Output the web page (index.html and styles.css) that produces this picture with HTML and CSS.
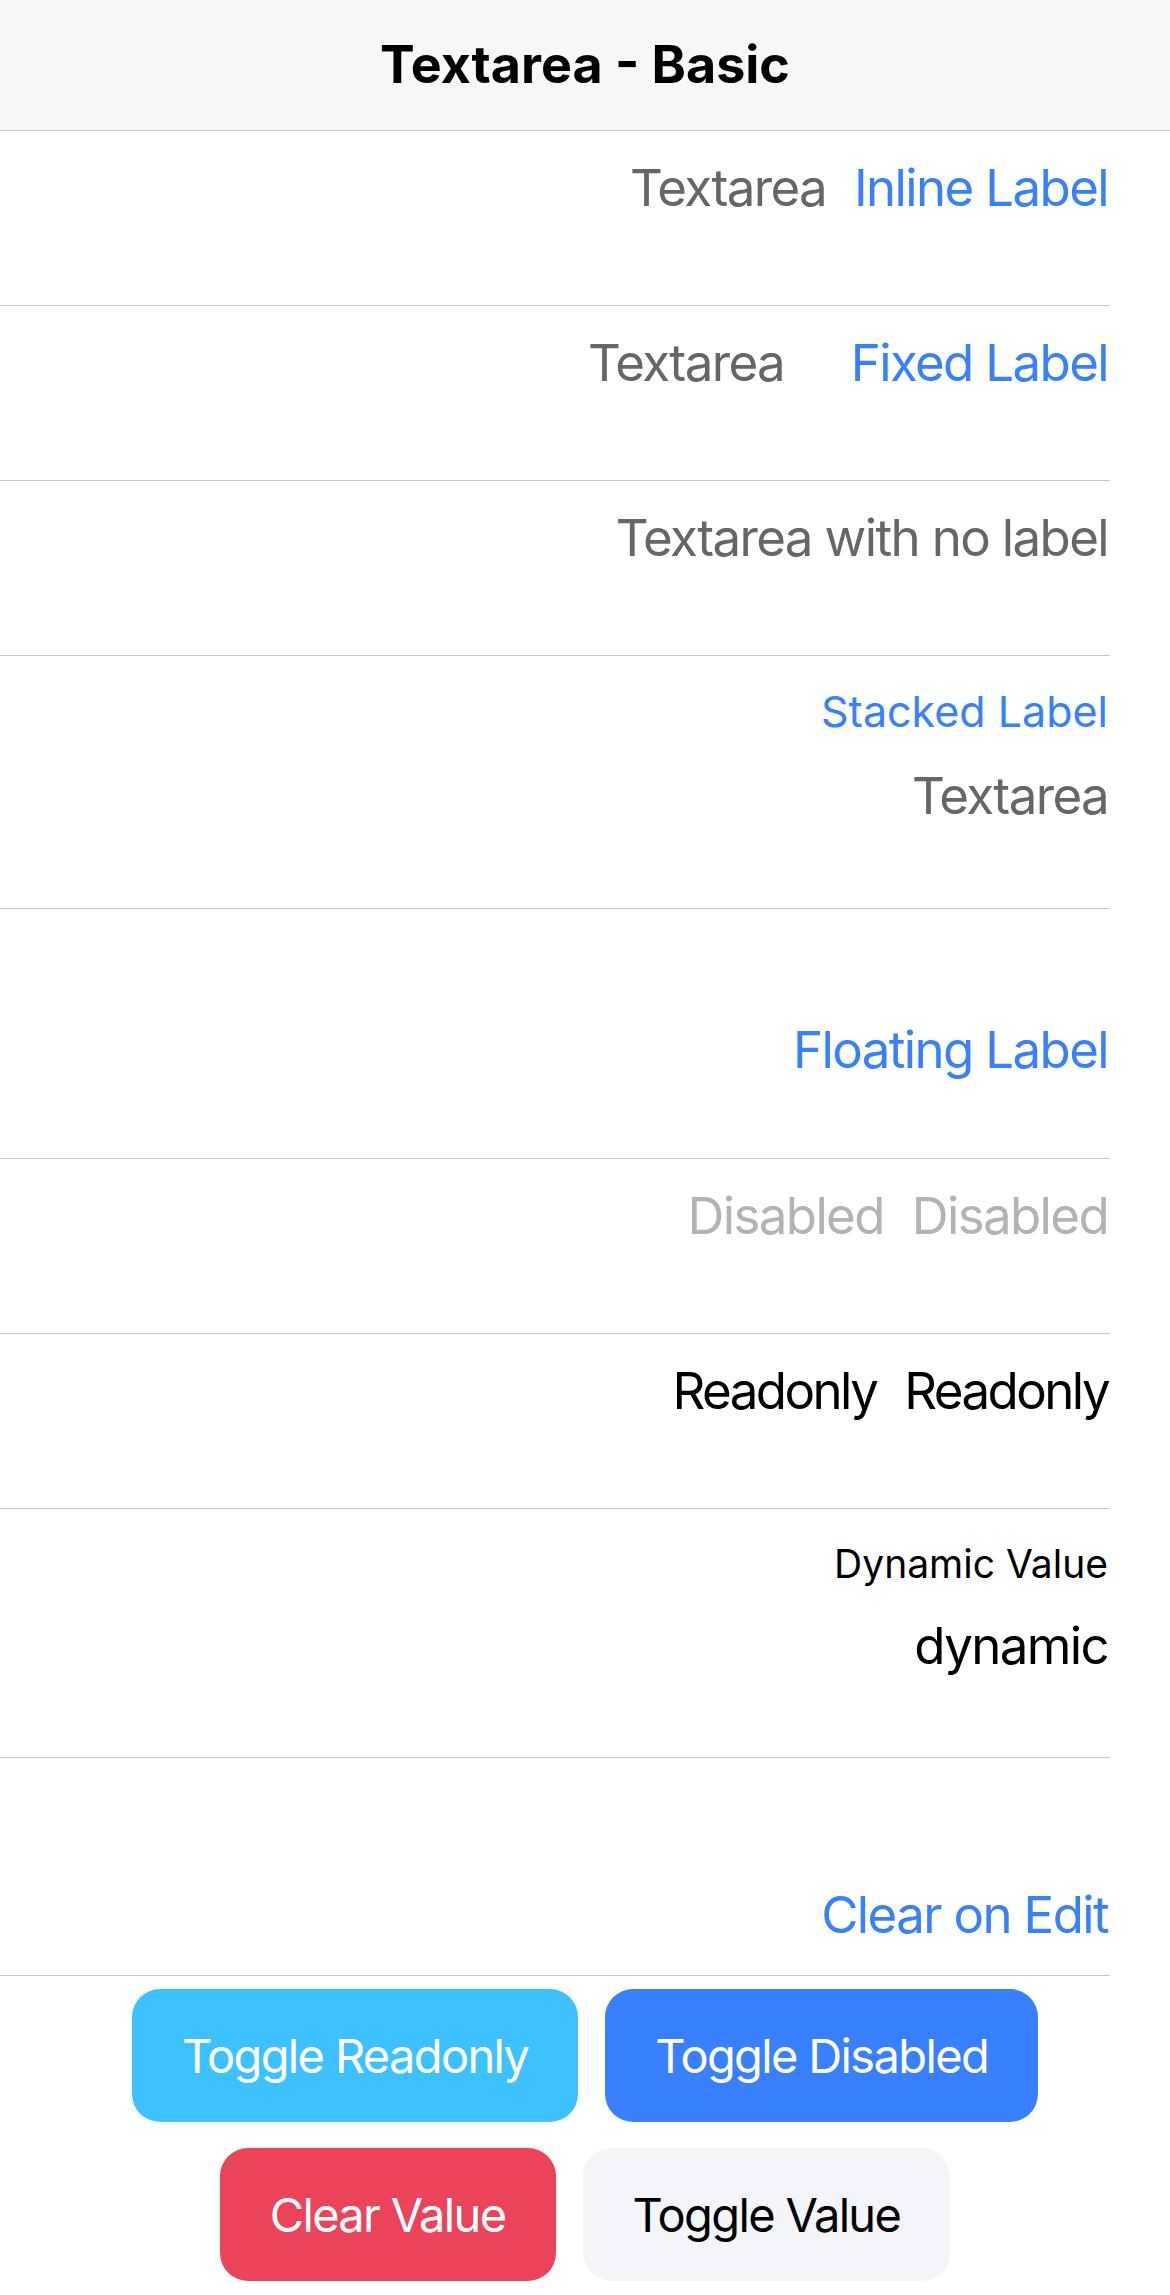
FILE: index.html
```html
<!DOCTYPE html>
<html lang="en">
<head>
<meta charset="utf-8">
<title>Textarea - Basic</title>
<link rel="stylesheet" href="styles.css">
</head>
<body>
<header class="toolbar">
  <h1 class="title">Textarea - Basic</h1>
</header>
<main class="list" dir="rtl">
  <div class="item">
    <div class="item-inner row">
      <span class="label primary">Inline Label</span>
      <div class="textarea placeholder">Textarea</div>
    </div>
  </div>
  <div class="item">
    <div class="item-inner row">
      <span class="label primary fixed">Fixed Label</span>
      <div class="textarea placeholder">Textarea</div>
    </div>
  </div>
  <div class="item">
    <div class="item-inner row">
      <div class="textarea placeholder">Textarea with no label</div>
    </div>
  </div>
  <div class="item">
    <div class="item-inner stacked">
      <span class="label primary small">Stacked Label</span>
      <div class="textarea placeholder after-small">Textarea</div>
    </div>
  </div>
  <div class="item">
    <div class="item-inner floating">
      <span class="label primary">Floating Label</span>
    </div>
  </div>
  <div class="item">
    <div class="item-inner row disabled">
      <span class="label">Disabled</span>
      <div class="textarea">Disabled</div>
    </div>
  </div>
  <div class="item">
    <div class="item-inner row readonly">
      <span class="label dark">Readonly</span>
      <div class="textarea dark">Readonly</div>
    </div>
  </div>
  <div class="item">
    <div class="item-inner dynamic">
      <span class="label dark smaller">Dynamic Value</span>
      <div class="textarea dark after-smaller">dynamic</div>
    </div>
  </div>
  <div class="item">
    <div class="item-inner clear-edit">
      <span class="label primary">Clear on Edit</span>
    </div>
  </div>
</main>
<div class="buttons">
  <div class="btn-row">
    <button class="btn btn-secondary" type="button">Toggle Readonly</button>
    <button class="btn btn-primary" type="button">Toggle Disabled</button>
  </div>
  <div class="btn-row">
    <button class="btn btn-danger" type="button">Clear Value</button>
    <button class="btn btn-light" type="button">Toggle Value</button>
  </div>
</div>
</body>
</html>
```
FILE: styles.css
```css
html, body {
  margin: 0;
  padding: 0;
  background: #ffffff;
}

body {
  font-family: Inter, "Noto Sans", "Liberation Sans", sans-serif;
  color: #000000;
  -webkit-font-smoothing: antialiased;
}

.toolbar {
  box-sizing: border-box;
  height: 131px;
  background: #f7f7f7;
  border-bottom: 1px solid #c6c6c8;
  display: flex;
  align-items: center;
  justify-content: center;
}

.title {
  margin: 0;
  font-size: 52px;
  line-height: 62px;
  font-weight: 700;
  letter-spacing: 0;
}

.list {
  display: flex;
  flex-direction: column;
}

.item {
  padding-inline-start: 60px;
}

.item-inner {
  box-sizing: border-box;
  height: 175px;
  padding-inline-start: 2px;
  border-bottom: 1px solid #c8c7cc;
  font-size: 51px;
  line-height: 62px;
  letter-spacing: -0.032em;
}

.row {
  display: flex;
  align-items: flex-start;
  gap: 28px;
  padding-top: 26px;
}

.readonly {
  letter-spacing: -0.05em;
}

.stacked {
  height: 253px;
  display: flex;
  flex-direction: column;
  align-items: stretch;
}

.floating {
  height: 250px;
  padding-top: 110px;
}

.dynamic {
  height: 249px;
  display: flex;
  flex-direction: column;
}

.clear-edit {
  height: 218px;
  padding-top: 126px;
}

.label {
  flex: 0 0 auto;
  white-space: nowrap;
}

.label.fixed {
  width: 296px;
}

.label.small {
  font-size: 43px;
  line-height: 50px;
  letter-spacing: 0;
  margin-top: 30px;
}

.label.smaller {
  font-size: 39px;
  line-height: 44px;
  letter-spacing: 0;
  margin-top: 33px;
}

.textarea {
  flex: 1 1 auto;
  white-space: nowrap;
}

.after-small {
  margin-top: 29px;
}

.after-smaller {
  margin-top: 29px;
}

.primary {
  color: #3880ff;
}

.placeholder {
  color: #666666;
}

.dark {
  color: #000000;
}

.disabled {
  color: #b3b3b3;
}

.buttons {
  display: flex;
  flex-direction: column;
  align-items: center;
  gap: 26px;
  padding-top: 13px;
}

.btn-row {
  display: flex;
  justify-content: center;
  gap: 27px;
}

.btn {
  height: 133px;
  padding: 0 50px;
  border: none;
  border-radius: 28px;
  font-family: inherit;
  font-size: 47px;
  letter-spacing: -0.035em;
  color: #ffffff;
  cursor: pointer;
}

.btn-secondary {
  background: #3dc2ff;
}

.btn-primary {
  background: #3880ff;
}

.btn-danger {
  background: #eb445a;
}

.btn-light {
  background: #f4f5f8;
  color: #000000;
}
```
